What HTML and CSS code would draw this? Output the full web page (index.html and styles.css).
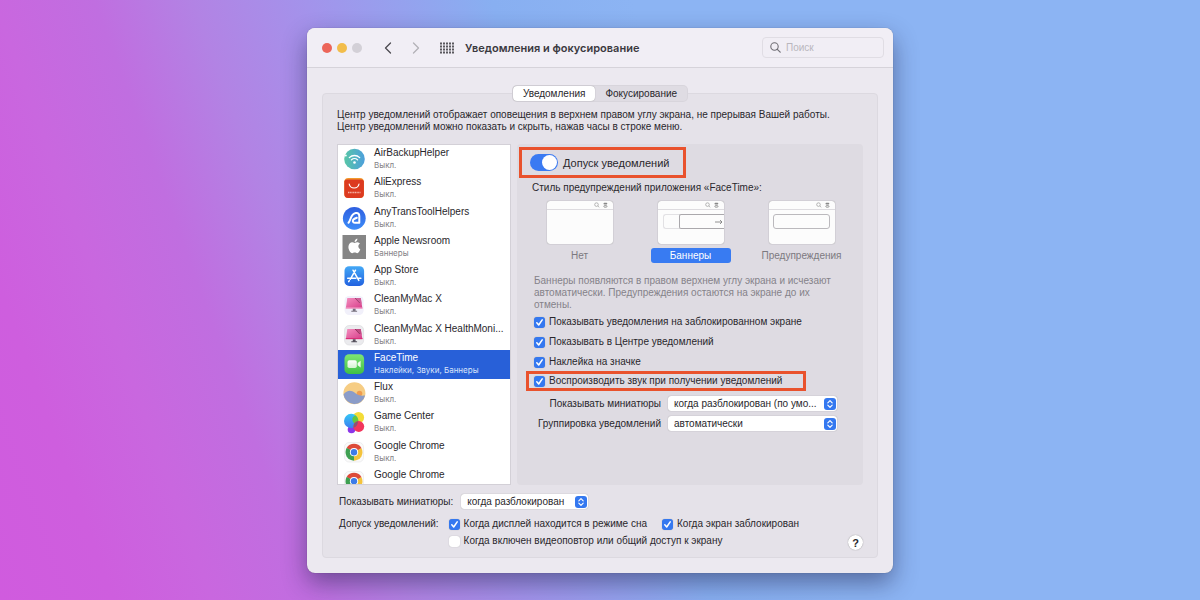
FILE: index.html
```html
<!DOCTYPE html>
<html lang="ru">
<head>
    <meta charset="UTF-8">
    <meta name="viewport" content="width=device-width, initial-scale=1.0">
    <title>Уведомления и фокусирование</title>
    <link rel="stylesheet" href="styles.css">
</head>
<body>
    <!-- shared icons -->
    <svg class="defs" aria-hidden="true">
        <defs>
            <linearGradient id="g-air" x1="0" y1="0" x2="1" y2="0"><stop offset="0" stop-color="#58c6a6"/><stop offset="1" stop-color="#4d9fdc"/></linearGradient>
            <linearGradient id="g-any" x1="0" y1="0" x2="0" y2="1"><stop offset="0" stop-color="#2f5fe0"/><stop offset="1" stop-color="#3c8cf8"/></linearGradient>
            <linearGradient id="g-store" x1="0" y1="0" x2="0" y2="1"><stop offset="0" stop-color="#43a8f6"/><stop offset="1" stop-color="#2262e0"/></linearGradient>
            <linearGradient id="g-pink" x1="0" y1="0" x2="1" y2="1"><stop offset="0" stop-color="#f58fc0"/><stop offset="1" stop-color="#d63c88"/></linearGradient>
            <linearGradient id="g-face" x1="0" y1="0" x2="0" y2="1"><stop offset="0" stop-color="#7fe573"/><stop offset="1" stop-color="#3fc046"/></linearGradient>
            <linearGradient id="g-blue" x1="0" y1="0" x2="0" y2="1"><stop offset="0" stop-color="#35c8f5"/><stop offset="1" stop-color="#3b7df0"/></linearGradient>
            <linearGradient id="g-cam" x1="0" y1="0" x2="0" y2="1"><stop offset="0" stop-color="#fff"/><stop offset="1" stop-color="#d5f3d2"/></linearGradient>
        </defs>
        <symbol id="chrome" viewBox="0 0 24 24">
            <rect x="2.500" y="2.500" width="19" height="19.500" rx="4.500" fill="#fafafa" stroke="#e6e6e8" stroke-width=".6"/>
            <path d="M12 12.200 4.640 7.950A8.500 8.500 0 0 1 19.360 7.950Z" fill="#dd4b3a"/>
            <path d="M12 12.200 4.640 7.950A8.500 8.500 0 0 0 12 20.700Z" fill="#3fa052"/>
            <path d="M12 12.200 19.360 7.950A8.500 8.500 0 0 1 12 20.700Z" fill="#f4c33c"/>
            <path d="M4.640 7.950 8.500 14.500 12 12Z" fill="#3fa052"/>
            <path d="M19.360 7.950H12V12Z" fill="#dd4b3a"/>
            <circle cx="12" cy="12.200" r="4.100" fill="#fff"/>
            <circle cx="12" cy="12.200" r="3.200" fill="#3d7be8"/>
        </symbol>
        <symbol id="arrows" viewBox="0 0 12 12">
            <rect width="12" height="12" rx="3" fill="#3478f0"/>
            <path d="M3.800 4.800 6 2.600 8.200 4.800M3.800 7.200 6 9.400 8.200 7.200" fill="none" stroke="#fff" stroke-width="1.100" stroke-linecap="round" stroke-linejoin="round"/>
        </symbol>
        <symbol id="menu-icons" viewBox="0 0 16 8">
            <circle cx="3.500" cy="3.600" r="1.800" fill="none" stroke="#999" stroke-width=".7"/>
            <path d="M4.900 5 6.300 6.400" stroke="#999" stroke-width=".7"/>
            <rect x="10.500" y="1.700" width="3.800" height="1.800" rx=".9" fill="#888"/>
            <rect x="10.800" y="4.600" width="3.200" height="1.600" rx=".8" fill="none" stroke="#888" stroke-width=".8"/>
        </symbol>
    </svg>

    <main class="window">
        <header class="titlebar">
            <div class="lights">
                <span class="light red"></span>
                <span class="light yellow"></span>
                <span class="light gray"></span>
            </div>
            <div class="nav">
                <button class="icon-btn" aria-label="Назад">
                    <svg width="8" height="12" viewBox="0 0 8 12"><path d="M6.500 1 1.500 6l5 5" fill="none" stroke="#4c4a50" stroke-width="1.300" stroke-linecap="round" stroke-linejoin="round"/></svg>
                </button>
                <button class="icon-btn" aria-label="Вперед">
                    <svg width="8" height="12" viewBox="0 0 8 12"><path d="M1.500 1l5 5-5 5" fill="none" stroke="#b3b1b7" stroke-width="1.300" stroke-linecap="round" stroke-linejoin="round"/></svg>
                </button>
            </div>
            <button class="icon-btn" aria-label="Показать все">
                <svg width="14" height="12" viewBox="0 0 14 12"><path d="M0 1.500H14M0 4.500H14M0 7.500H14M0 10.500H14" stroke="#5a585e" stroke-width="2" stroke-dasharray="2 1" fill="none"/></svg>
            </button>
            <h1>Уведомления и фокусирование</h1>
            <label class="search">
                <svg width="11" height="11" viewBox="0 0 11 11"><circle cx="4.500" cy="4.500" r="3.700" fill="none" stroke="#6f6d74" stroke-width="1.100"/><path d="M7.300 7.300 10.200 10.200" stroke="#6f6d74" stroke-width="1.200" stroke-linecap="round"/></svg>
                <input type="search" placeholder="Поиск" aria-label="Поиск">
            </label>
        </header>

        <section class="content">
            <div class="tabs">
                <button class="tab active">Уведомления</button>
                <button class="tab">Фокусирование</button>
            </div>
            <div class="panel">
                <p class="intro">Центр уведомлений отображает оповещения в верхнем правом углу экрана, не прерывая Вашей работы.<br>Центр уведомлений можно показать и скрыть, нажав часы в строке меню.</p>

                <div class="columns">
                    <div class="list-box">
                        <ul class="app-list">
                            <li class="app">
                                <svg class="app-icon" viewBox="0 0 24 24"><circle cx="12.500" cy="12" r="10.300" fill="url(#g-air)"/><path d="M7.300 10.600a7.500 7.500 0 0 1 10.400 0M9.400 12.900a4.500 4.500 0 0 1 6.200 0" fill="none" stroke="#fff" stroke-width="1.300" stroke-linecap="round"/><circle cx="12.500" cy="15.500" r="1.300" fill="#fff"/><circle cx="3.800" cy="8.500" r="1" fill="#fff"/></svg>
                                <div class="app-text"><span class="name">AirBackupHelper</span><span class="state">Выкл.</span></div>
                            </li>
                            <li class="app">
                                <svg class="app-icon" viewBox="0 0 24 24"><rect x="2.300" y="2" width="19.600" height="20" rx="4" fill="#f29a2e"/><path d="M2.300 5V18a4 4 0 0 0 4 4H17.900a4 4 0 0 0 4-4V5a3 3 0 0 0-3-1.500H5.300a3 3 0 0 0-3 1.500Z" fill="#dc3a20"/><path d="M7.200 8a5 5 0 0 0 9.800 0" fill="none" stroke="#fff" stroke-width="1.200" stroke-linecap="round"/><path d="M6 16.500h12.500" stroke="#f5b2a5" stroke-width="1.600" stroke-dasharray="1.200 .5"/></svg>
                                <div class="app-text"><span class="name">AliExpress</span><span class="state">Выкл.</span></div>
                            </li>
                            <li class="app">
                                <svg class="app-icon" viewBox="0 0 24 24"><circle cx="12.300" cy="12.300" r="11.400" fill="url(#g-any)"/><path d="M6.500 16.800c2.300-2.400 2-8.800 7.300-9.700 2.600-.4 3.500 1 3.500 3.200v6.500h-4.400c-2.300 0-2.700-2.300-1.300-3.400 1-.8 2-1.300 3.200-1.700" fill="none" stroke="#fff" stroke-width="2" stroke-linejoin="round" stroke-linecap="round"/></svg>
                                <div class="app-text"><span class="name">AnyTransToolHelpers</span><span class="state">Выкл.</span></div>
                            </li>
                            <li class="app">
                                <svg class="app-icon" viewBox="0 0 24 24"><rect x=".5" width="24" height="24" fill="#858585"/><path d="M12.600 8c.9-.3 1.700-.8 2.600-.8 1.100 0 2.100.6 2.700 1.400-2.300 1.500-1.900 4.700.4 5.700-.5 1.500-1.700 3.900-3.100 3.900-.9 0-1.300-.6-2.500-.6s-1.600.6-2.500.6c-1.900 0-4.300-4.200-3.700-7.200.4-2.300 2-3.700 3.700-3.700.9 0 1.600.5 2.400.7Z" fill="#fff"/><path d="M12.600 7c-.1-1.800 1.200-3.200 2.800-3.500.1 1.800-1.200 3.400-2.800 3.500Z" fill="#fff"/></svg>
                                <div class="app-text"><span class="name">Apple Newsroom</span><span class="state">Баннеры</span></div>
                            </li>
                            <li class="app">
                                <svg class="app-icon" viewBox="0 0 24 24"><rect x="2.500" y="2.300" width="19.600" height="19.600" rx="4.500" fill="url(#g-store)"/><path d="M13.500 6.200 8.200 15.300M11 6.200l5.800 10.200M5.700 14.300h8.100M16 14.300h2.900M7.300 16.700l-.6 1" stroke="#fff" stroke-width="1.500" stroke-linecap="round" fill="none"/></svg>
                                <div class="app-text"><span class="name">App Store</span><span class="state">Выкл.</span></div>
                            </li>
                            <li class="app">
                                <svg class="app-icon" viewBox="0 0 24 24"><rect x="2.600" y="3" width="19" height="19" rx="4.500" fill="#f1f0fa"/><path d="M5.300 5h13.500l1.600 10.500H3.800Z" fill="url(#g-pink)"/><path d="M13 5h5.800l.9 6Z" fill="#d0609a"/><path d="m13 5 4.800 5" stroke="#8a3a62" stroke-width=".8"/><path d="M3.800 14.500h16.600v1.200H3.800Z" fill="#f6a7cd"/><path d="M10.800 15.700h2.800v2h1.500v1H9.300v-1h1.500Z" fill="#77717f"/></svg>
                                <div class="app-text"><span class="name">CleanMyMac X</span><span class="state">Выкл.</span></div>
                            </li>
                            <li class="app">
                                <svg class="app-icon" viewBox="0 0 24 24"><rect x="2.600" y="2.500" width="19" height="19.500" rx="4.500" fill="#ebebee" stroke="#d8d8dc" stroke-width=".6"/><path d="M5.300 6h13.500l1.600 10H3.800Z" fill="url(#g-pink)"/><path d="M13 6h5.800l.9 6Z" fill="#c04a82"/><path d="m13 6 4.800 5" stroke="#7c2c50" stroke-width=".8"/><path d="M3.800 15h16.600v1.200H3.800Z" fill="#d92f78"/><path d="M10.800 16.200h2.800v2h1.500v1H9.300v-1h1.500Z" fill="#56515c"/></svg>
                                <div class="app-text"><span class="name">CleanMyMac X HealthMoni...</span><span class="state">Выкл.</span></div>
                            </li>
                            <li class="app selected">
                                <svg class="app-icon" viewBox="0 0 24 24"><rect x="2.500" y="2.300" width="19.600" height="19.600" rx="4.500" fill="url(#g-face)"/><rect x="5.500" y="8.300" width="9.300" height="7.700" rx="1.800" fill="url(#g-cam)"/><path d="m15.600 11 3-2.200v6.600l-3-2.200Z" fill="#eefbed"/></svg>
                                <div class="app-text"><span class="name">FaceTime</span><span class="state">Наклейки, Звуки, Баннеры</span></div>
                            </li>
                            <li class="app">
                                <svg class="app-icon" viewBox="0 0 24 24"><circle cx="12.400" cy="12.200" r="11" fill="#f6cd84"/><circle cx="17.500" cy="12.500" r="2.800" fill="#ef9c4f"/><path d="M1.500 13.500C5 8.500 9.500 9 12.500 11.500c3.500 3 6.500 3.500 10.600 3a11 11 0 0 1-21.600-1Z" fill="#8b9cc8"/></svg>
                                <div class="app-text"><span class="name">Flux</span><span class="state">Выкл.</span></div>
                            </li>
                            <li class="app">
                                <svg class="app-icon" viewBox="0 0 24 24"><circle cx="16.500" cy="7.500" r="5.600" fill="#f3dc37"/><circle cx="9.500" cy="19.500" r="3.800" fill="#8b35e8"/><circle cx="9.200" cy="11" r="7.200" fill="url(#g-blue)"/><path d="M13.700 5.400a7.200 7.200 0 0 1 1.600 9.400 6 6 0 0 1-5-5.500c0-1.800 1.200-3.300 3.400-3.900Z" fill="#62c73f"/><circle cx="16.800" cy="16.500" r="5.400" fill="#f2355c"/><path d="M11.700 14.900a5.400 5.400 0 0 1 4.300-3.700 7 7 0 0 1-4.400 6.600Z" fill="#8c5470"/></svg>
                                <div class="app-text"><span class="name">Game Center</span><span class="state">Выкл.</span></div>
                            </li>
                            <li class="app">
                                <svg class="app-icon"><use href="#chrome"/></svg>
                                <div class="app-text"><span class="name">Google Chrome</span><span class="state">Выкл.</span></div>
                            </li>
                            <li class="app">
                                <svg class="app-icon"><use href="#chrome"/></svg>
                                <div class="app-text"><span class="name">Google Chrome</span><span class="state">Выкл.</span></div>
                            </li>
                        </ul>
                    </div>

                    <div class="details">
                        <label class="allow marked">
                            <input type="checkbox" class="switch" role="switch" checked>
                            <span>Допуск уведомлений</span>
                        </label>

                        <h2>Стиль предупреждений приложения «FaceTime»:</h2>
                        <div class="styles">
                            <button class="style">
                                <span class="preview"><span class="menubar"><svg width="16" height="8"><use href="#menu-icons"/></svg></span></span>
                                <span class="style-name">Нет</span>
                            </button>
                            <button class="style active">
                                <span class="preview">
                                    <span class="menubar"><svg width="16" height="8"><use href="#menu-icons"/></svg></span>
                                    <span class="sliding"><span class="ghost"></span><span class="banner"><svg width="8" height="6" viewBox="0 0 8 6"><path d="M0 3h7M5 1l2 2-2 2" fill="none" stroke="#777" stroke-width=".8"/></svg></span></span>
                                </span>
                                <span class="style-name">Баннеры</span>
                            </button>
                            <button class="style">
                                <span class="preview">
                                    <span class="menubar"><svg width="16" height="8"><use href="#menu-icons"/></svg></span>
                                    <span class="alert"></span>
                                </span>
                                <span class="style-name">Предупреждения</span>
                            </button>
                        </div>

                        <p class="hint">Баннеры появляются в правом верхнем углу экрана и исчезают автоматически. Предупреждения остаются на экране до их отмены.</p>

                        <div class="checks">
                            <label class="check"><input type="checkbox" checked><span>Показывать уведомления на заблокированном экране</span></label>
                            <label class="check"><input type="checkbox" checked><span>Показывать в Центре уведомлений</span></label>
                            <label class="check"><input type="checkbox" checked><span>Наклейка на значке</span></label>
                            <label class="check marked"><input type="checkbox" checked><span>Воспроизводить звук при получении уведомлений</span></label>
                        </div>

                        <div class="options">
                            <label for="previews">Показывать миниатюры</label>
                            <div class="select">
                                <select id="previews"><option>когда разблокирован (по умо...</option></select>
                                <svg class="arrows"><use href="#arrows"/></svg>
                            </div>
                            <label for="grouping">Группировка уведомлений</label>
                            <div class="select">
                                <select id="grouping"><option>автоматически</option></select>
                                <svg class="arrows"><use href="#arrows"/></svg>
                            </div>
                        </div>
                    </div>
                </div>

                <div class="row">
                    <label for="all-previews">Показывать миниатюры:</label>
                    <div class="select small">
                        <select id="all-previews"><option>когда разблокирован</option></select>
                        <svg class="arrows"><use href="#arrows"/></svg>
                    </div>
                </div>
                <div class="row allow-row">
                    <span>Допуск уведомлений:</span>
                    <div class="allow-checks">
                        <label class="check"><input type="checkbox" checked><span>Когда дисплей находится в режиме сна</span></label>
                        <label class="check"><input type="checkbox" checked><span>Когда экран заблокирован</span></label>
                        <label class="check"><input type="checkbox"><span>Когда включен видеоповтор или общий доступ к экрану</span></label>
                    </div>
                    <button class="help" aria-label="Справка">?</button>
                </div>
            </div>
        </section>
    </main>
</body>
</html>
```
FILE: styles.css
```css
* {
    box-sizing: border-box;
}
body {
    margin: 0;
    min-height: 100vh;
    padding: 28px 16px 27px;
    font-family: "Liberation Sans", Arial, sans-serif;
    font-size: 10px;
    line-height: 12px;
    color: #29272c;
    background: linear-gradient(70deg, #d05bde 0%, #ce5ede 8%, #c967df 15%, #c06ee0 22%, #b283e4 29%, #a393eb 37%, #88aff1 50%, #8cb4f3 60%);
}
h1, h2, p, ul {
    margin: 0;
    padding: 0;
}
button, input, select {
    font: inherit;
    color: inherit;
    margin: 0;
}
button {
    padding: 0;
    border: 0;
    background: none;
}
svg {
    display: block;
}
.defs {
    position: absolute;
    width: 0;
    height: 0;
}

/* window */
.window {
    max-width: 586px;
    margin: 0 auto;
    border-radius: 8px;
    background-color: #ece9f0;
    box-shadow: 0 0 1px rgba(0, 0, 0, 0.4), 0 10px 24px rgba(20, 20, 60, 0.45);
}
.titlebar {
    display: flex;
    align-items: center;
    height: 40px;
    padding: 0 9px 0 15px;
    border-bottom: 1px solid #d6d3da;
    border-radius: 8px 8px 0 0;
    background-color: #f1eef5;
}
.lights {
    display: flex;
    gap: 5px;
}
.light {
    width: 10px;
    height: 10px;
    border-radius: 50%;
}
.red {
    background-color: #ec6559;
}
.yellow {
    background-color: #f2bd4b;
}
.gray {
    background-color: #d3d0d7;
}
.nav {
    display: flex;
    gap: 20px;
    margin: 0 20px 0 22px;
}
h1 {
    flex: 1;
    margin-left: 11px;
    font-family: Inter, sans-serif;
    font-size: 11px;
    font-weight: 600;
    color: #3b393f;
}
.search {
    display: flex;
    align-items: center;
    gap: 5px;
    width: 122px;
    height: 21px;
    padding: 0 7px;
    border: 1px solid #e0dde4;
    border-radius: 4px;
}
.search input {
    flex: 1;
    min-width: 0;
    padding: 0;
    border: 0;
    outline: 0;
    background: none;
}
.search input::placeholder {
    color: #b9b6bd;
}

/* content */
.content {
    padding: 18px 15px 15px;
}
.tabs {
    position: relative;
    display: flex;
    width: max-content;
    margin: 0 auto -8px;
    border-radius: 4px;
    background-color: #dfdce3;
    box-shadow: 0 0 0 1px #d8d5dc;
}
.tab {
    height: 15px;
    padding: 0 10px;
    border-radius: 4px;
}
.tab.active {
    background-color: #fff;
    box-shadow: 0 0 1px rgba(0, 0, 0, 0.4);
}
.panel {
    padding: 15px 14px 7px;
    border: 1px solid #dcd9e0;
    border-radius: 4px;
    background-color: #e5e2e9;
}
.intro {
    margin-bottom: 11px;
}
.columns {
    display: flex;
    gap: 6px;
    height: 341px;
}
.list-box {
    width: 174px;
    border: 1px solid #d3d0d7;
    overflow: hidden;
    background-color: #fff;
}
.app-list {
    display: flex;
    flex-direction: column;
    height: 351px;
    list-style: none;
}
.app {
    display: flex;
    flex: 1;
    gap: 8px;
    padding: 2px 4px;
}
.app-icon {
    flex: none;
    width: 24px;
    height: 24px;
}
.app-text {
    min-width: 0;
}
.name, .state {
    display: block;
    white-space: nowrap;
}
.state {
    font-family: Inter, sans-serif;
    font-size: 8px;
    color: #848286;
}
.app.selected {
    background-color: #2860d8;
    color: #fff;
}
.selected .state {
    color: #d8e3fa;
}

/* details */
.details {
    flex: 1;
    min-width: 0;
    padding: 3px 14px 0 2px;
    border-radius: 4px;
    background-color: #dedbe2;
}
.marked {
    border: 3px solid #e9522d;
}
.allow {
    display: flex;
    align-items: center;
    gap: 5px;
    width: max-content;
    height: 31px;
    padding: 0 13px 0 8px;
    font-size: 11px;
}
.switch {
    appearance: none;
    width: 28px;
    height: 17px;
    border-radius: 9px;
    background-color: #3a7af2;
}
.switch::before {
    content: "";
    display: block;
    width: 15px;
    height: 15px;
    margin: 1px 1px 1px auto;
    border-radius: 50%;
    background-color: #fff;
}
h2 {
    margin: 4px 0 7px 13px;
    font-size: 10px;
    font-weight: 400;
}
.styles {
    display: grid;
    grid-template-columns: repeat(3, 111px);
    margin-left: 5px;
}
.style {
    display: flex;
    flex-direction: column;
    align-items: center;
    gap: 4px;
    color: #7c7980;
}
.preview {
    width: 66px;
    height: 43px;
    border-radius: 3px;
    overflow: hidden;
    background-color: #fcfcfc;
    box-shadow: 0 0 1px rgba(0, 0, 0, 0.5);
}
.menubar {
    display: flex;
    justify-content: flex-end;
    padding-right: 4px;
    height: 9px;
    border-bottom: 1px solid #dddbdf;
}
.sliding {
    display: flex;
    margin: 4px 0 0 5px;
}
.ghost {
    width: 16px;
    height: 15px;
    border: 1px solid #e2e1e4;
    border-right: 0;
    border-radius: 3px 0 0 3px;
}
.banner {
    display: flex;
    flex: 1;
    align-items: center;
    justify-content: flex-end;
    height: 15px;
    border: 1px solid #aaa8ac;
    border-right: 0;
    border-radius: 2px 0 0 2px;
    padding-right: 1px;
}
.alert {
    display: block;
    height: 15px;
    margin: 4px 5px 0 4px;
    border: 1px solid #bbb9bd;
    border-radius: 3px;
}
.style-name {
    min-width: 80px;
    line-height: 15px;
    border-radius: 3px;
}
.active .style-name {
    background-color: #387bf2;
    color: #fff;
}
.hint {
    margin: 12px 0 5px 15px;
    color: #858289;
}
.checks {
    display: flex;
    flex-direction: column;
    align-items: flex-start;
    gap: 8px;
    margin-left: 15px;
}
.check {
    display: flex;
    align-items: center;
    gap: 4px;
}
.check input {
    appearance: none;
    width: 11px;
    height: 11px;
    border-radius: 3px;
    background-color: #fff;
    box-shadow: 0 0 1px rgba(0, 0, 0, 0.3);
}
.check input:checked {
    background: #3478f0 url("data:image/svg+xml,%3Csvg xmlns='http://www.w3.org/2000/svg' viewBox='0 0 11 11'%3E%3Cpath d='M2.800 5.800 4.700 8 8.200 2.800' fill='none' stroke='%23fff' stroke-width='1.500' stroke-linecap='round' stroke-linejoin='round'/%3E%3C/svg%3E");
}
.check.marked {
    margin: -5px 0 -4px -8px;
    padding: 1px 21px 1px 5px;
}
.options {
    display: grid;
    grid-template-columns: 127px 169px;
    align-items: center;
    gap: 5px 7px;
    margin: 9px 0 0 15px;
}
.options label {
    text-align: right;
    white-space: nowrap;
}
.select {
    position: relative;
}
.select select {
    appearance: none;
    display: block;
    width: 100%;
    height: 15px;
    padding: 0 14px 0 6px;
    border: 0;
    border-radius: 3px;
    background-color: #fff;
    box-shadow: 0 0 1px rgba(0, 0, 0, 0.4);
}
.select.small {
    width: 127px;
}
.arrows {
    position: absolute;
    top: 2px;
    right: 1px;
    width: 12px;
    height: 12px;
}

/* bottom rows */
.row {
    display: flex;
    align-items: center;
    gap: 8px;
    margin: 9px 0 0 2px;
}
.allow-row {
    align-items: flex-start;
    gap: 10px;
    min-height: 32px;
}
.allow-checks {
    display: flex;
    flex: 1;
    flex-wrap: wrap;
    gap: 5px 15px;
}
.help {
    align-self: flex-end;
    width: 15px;
    height: 15px;
    border-radius: 50%;
    background-color: #fff;
    box-shadow: 0 0 1px rgba(0, 0, 0, 0.5);
    font-size: 11px;
    font-weight: 700;
}
```
